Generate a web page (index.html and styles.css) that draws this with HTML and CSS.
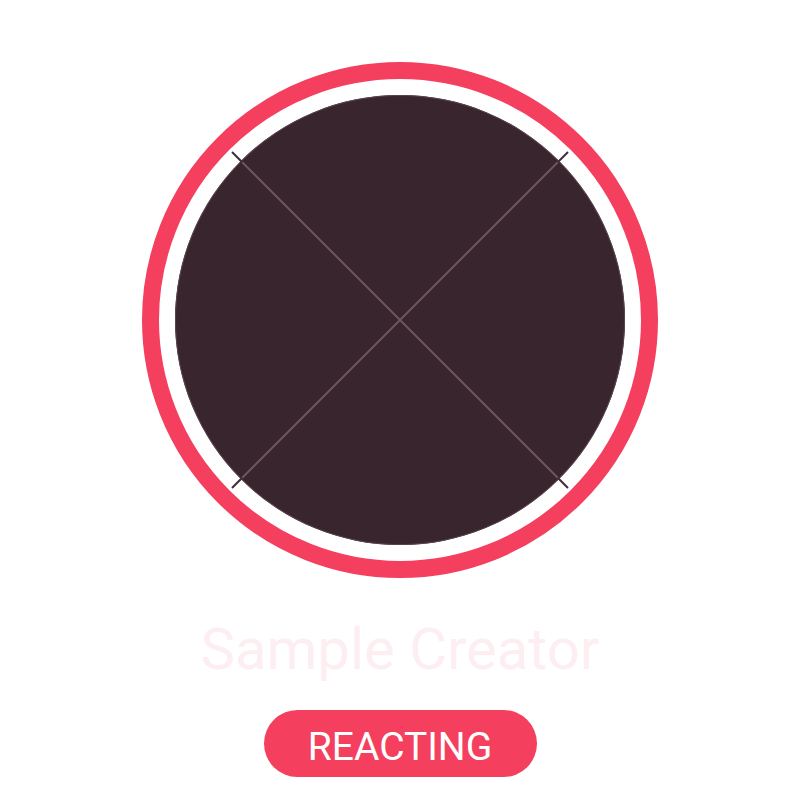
FILE: index.html
```html
<!DOCTYPE html>
<html>
<head>
<meta charset="utf-8">
<link rel="stylesheet" href="styles.css">
</head>
<body>
<div class="page">
  <div class="ring">
    <div class="avatar">
      <svg class="cross" width="450" height="450" viewBox="0 0 450 450">
        <defs>
          <clipPath id="disc"><circle cx="225" cy="225" r="223"/></clipPath>
        </defs>
        <line x1="57" y1="57" x2="393" y2="393" stroke="#3e2e35" stroke-width="2"/>
        <line x1="393" y1="57" x2="57" y2="393" stroke="#3e2e35" stroke-width="2"/>
        <g clip-path="url(#disc)">
          <line x1="57" y1="57" x2="393" y2="393" stroke="#6c5560" stroke-width="2"/>
          <line x1="393" y1="57" x2="57" y2="393" stroke="#6c5560" stroke-width="2"/>
        </g>
      </svg>
    </div>
  </div>
  <div class="name">Sample Creator</div>
  <div class="button">REACTING</div>
</div>
</body>
</html>
```
FILE: styles.css
```css
html, body {
  margin: 0;
  padding: 0;
  background: #ffffff;
}
.page {
  width: 800px;
  height: 800px;
  display: flex;
  flex-direction: column;
  align-items: center;
  padding-top: 62px;
  box-sizing: border-box;
  font-family: Roboto, "Liberation Sans", sans-serif;
}
.ring {
  width: 516px;
  height: 516px;
  border: 17px solid #f43f5e;
  border-radius: 50%;
  box-sizing: border-box;
  display: flex;
  align-items: center;
  justify-content: center;
}
.avatar {
  position: relative;
  width: 450px;
  height: 450px;
  border-radius: 50%;
  background: #38252d;
  box-shadow: inset 0 0 0 1px #5a4450;
}
.cross {
  position: absolute;
  left: 0;
  top: 0;
  overflow: visible;
}
.name {
  margin-top: 38px;
  font-size: 58px;
  line-height: 66px;
  color: #fdeef2;
}
.button {
  margin-top: 28px;
  width: 273px;
  height: 67px;
  padding-top: 7px;
  box-sizing: border-box;
  border-radius: 34px;
  background: #f43f5e;
  color: #ffffff;
  font-size: 39px;
  display: flex;
  align-items: center;
  justify-content: center;
}
```
